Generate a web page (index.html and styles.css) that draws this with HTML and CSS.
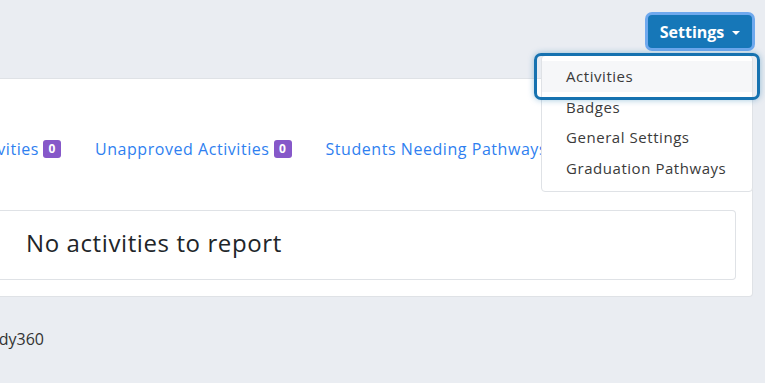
FILE: index.html
```html
<!DOCTYPE html>
<html lang="en">
<head>
    <meta charset="UTF-8">
    <meta name="viewport" content="width=device-width, initial-scale=1.0">
    <title>Activities Report</title>
    <link rel="stylesheet" href="styles.css">
</head>
<body>
    <div class="page">
        <div class="topbar">
            <div class="settings">
                <button class="settings-btn">Settings <span class="caret"></span></button>
                <ul class="dropdown">
                    <li class="dropdown-item focused">Activities</li>
                    <li class="dropdown-item">Badges</li>
                    <li class="dropdown-item">General Settings</li>
                    <li class="dropdown-item">Graduation Pathways</li>
                </ul>
            </div>
        </div>

        <div class="card">
            <div class="tabs">
                <a class="tab tab-first" href="#">Pending Activities <span class="badge">0</span></a>
                <a class="tab" href="#">Unapproved Activities <span class="badge">0</span></a>
                <a class="tab" href="#">Students Needing Pathways <span class="badge">0</span></a>
            </div>

            <div class="report-box">
                <h3>No activities to report</h3>
            </div>
        </div>

        <footer class="footer">
            <span class="footer-text">Copyright &copy; 2024 Study360</span>
        </footer>
    </div>
</body>
</html>
```

FILE: styles.css
```css
:root {
    --bg: #eaedf2;
    --border: #dfe2e6;
    --link: #2f7ff0;
    --badge: #8658c9;
    --primary: #1677b8;
    --text: #212529;
}

body {
    font-family: 'Open Sans', sans-serif;
    background: var(--bg);
    color: var(--text);
    margin: 0;
    overflow: hidden;
}

.page {
    margin-left: -40px;
}

.topbar {
    display: flex;
    justify-content: flex-end;
    padding: 15px 13px 0 0;
    height: 78px;
    box-sizing: border-box;
}

.settings {
    position: relative;
    height: 33px;
}

.settings-btn {
    font-family: inherit;
    font-size: 16px;
    font-weight: 700;
    color: #fff;
    background: var(--primary);
    border: none;
    border-radius: 4px;
    width: 104px;
    height: 33px;
    padding: 0;
    box-shadow: 0 0 0 3px #6fa9ee;
    display: flex;
    align-items: center;
    justify-content: center;
    gap: 8px;
}

.caret {
    width: 0;
    height: 0;
    border-left: 4px solid transparent;
    border-right: 4px solid transparent;
    border-top: 4px solid #fff;
    margin-top: 2px;
}

/* open menu sits over the card */
.dropdown {
    position: absolute;
    top: 40px;
    right: -1px;
    width: 212px;
    box-sizing: border-box;
    margin: 0;
    padding: 5px 0 7px;
    list-style: none;
    background: #fff;
    border: 1px solid var(--border);
    border-radius: 4px;
    z-index: 2;
}

.dropdown-item {
    height: 30.7px;
    line-height: 30.7px;
    padding-left: 24px;
    font-size: 15px;
    letter-spacing: 0.55px;
    color: #3a3a3a;
}

.dropdown-item.focused {
    background: #f6f7f9;
    position: relative;
}

.dropdown-item.focused::after {
    content: "";
    position: absolute;
    inset: -8px;
    border: 3px solid #1672b0;
    border-radius: 7px;
    box-shadow: 0 0 6px rgba(22, 114, 176, 0.4);
}

.card {
    background: #fff;
    border: 1px solid var(--border);
    border-left: none;
    border-radius: 0 4px 4px 0;
    margin-right: 12px;
    padding: 0 16px 16px;
}

.tabs {
    display: flex;
    gap: 34px;
    padding: 59px 0 50px;
    white-space: nowrap;
}

.tab {
    color: var(--link);
    text-decoration: none;
    font-size: 16px;
    letter-spacing: 0.55px;
    display: flex;
    align-items: center;
    gap: 4px;
}

.tab-first {
    width: 85px;
    justify-content: flex-end;
}

.badge {
    flex-shrink: 0;
    background: var(--badge);
    color: #fff;
    font-size: 12px;
    font-weight: 700;
    letter-spacing: 0;
    border-radius: 3px;
    width: 18px;
    height: 18px;
    line-height: 18px;
    text-align: center;
}

.report-box {
    border: 1px solid var(--border);
    border-left: none;
    border-radius: 0 4px 4px 0;
    height: 70px;
    box-sizing: border-box;
    display: flex;
    align-items: center;
    margin-left: -16px;
}

.report-box h3 {
    margin: 0 0 6px;
    padding-left: 66px;
    font-size: 24px;
    font-weight: 400;
    letter-spacing: 0.6px;
}

.footer {
    padding-top: 31px;
}

.footer-text {
    display: block;
    width: 84px;
    text-align: right;
    white-space: nowrap;
    direction: rtl;
    font-size: 16px;
    color: #333;
}
```
